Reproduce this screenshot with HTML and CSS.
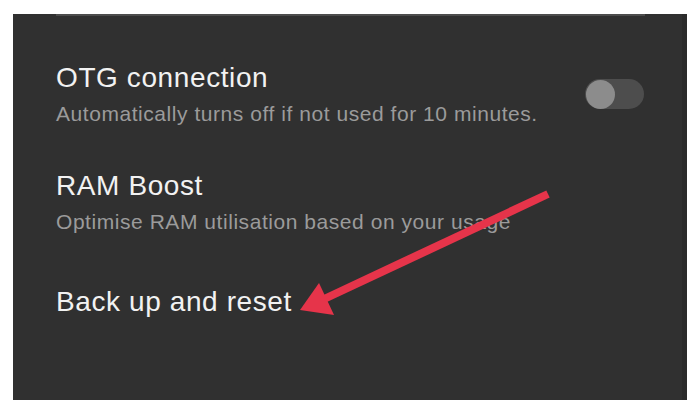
FILE: index.html
```html
<!DOCTYPE html>
<html lang="en">
<head>
<meta charset="utf-8">
<title>Settings</title>
<link rel="stylesheet" href="styles.css">
</head>
<body>
<div class="panel">
  <div class="divider"></div>
  <div class="list">
    <div class="row row-first">
      <div class="texts">
        <div class="title">OTG connection</div>
        <div class="subtitle">Automatically turns off if not used for 10 minutes.</div>
      </div>
      <div class="toggle"><div class="knob"></div></div>
    </div>
    <div class="row">
      <div class="texts">
        <div class="title">RAM Boost</div>
        <div class="subtitle">Optimise RAM utilisation based on your usage</div>
      </div>
    </div>
    <div class="row row-last">
      <div class="texts">
        <div class="title">Back up and reset</div>
      </div>
    </div>
  </div>
  <svg class="arrow" width="674" height="400" viewBox="13 0 674 400" xmlns="http://www.w3.org/2000/svg">
    <line x1="548" y1="180" x2="322" y2="286" stroke="#e6344a" stroke-width="8"/>
    <polygon points="300,296 319,269 334,301" fill="#e6344a"/>
  </svg>
</div>
</body>
</html>
```
FILE: styles.css
```css
html, body {
  margin: 0;
  padding: 0;
  background: #ffffff;
}
body {
  width: 700px;
  height: 400px;
  overflow: hidden;
  font-family: "Liberation Sans", Arial, sans-serif;
}
.panel {
  position: relative;
  margin-left: 13px;
  width: 674px;
  height: 400px;
  box-sizing: border-box;
  background: #303030;
  border-right: 5px solid #2b2b2b;
  padding: 0 38px 0 43px;
}
.divider {
  margin-top: 14px;
  height: 2px;
  background: #4c4c4c;
  margin-right: -1px;
}
.list {
  display: flex;
  flex-direction: column;
}
.row {
  display: flex;
  align-items: center;
  justify-content: space-between;
  padding: 21px 0;
}
.row-first {
  padding-top: 45px;
}
.row-last {
  padding-top: 29px;
}
.title {
  font-size: 28px;
  line-height: 34px;
  letter-spacing: 0.6px;
  color: #f2f2f2;
}
.subtitle {
  margin-top: 6px;
  font-size: 21px;
  line-height: 26px;
  letter-spacing: 0.55px;
  color: #9b9b9b;
}
.toggle {
  width: 59px;
  height: 30px;
  border-radius: 15px;
  background: #4d4d4d;
  display: flex;
  align-items: center;
  padding-left: 1px;
  box-sizing: border-box;
}
.knob {
  width: 29px;
  height: 29px;
  border-radius: 50%;
  background: #8c8c8c;
}
.arrow {
  position: absolute;
  left: 0;
  top: 0;
}
```
